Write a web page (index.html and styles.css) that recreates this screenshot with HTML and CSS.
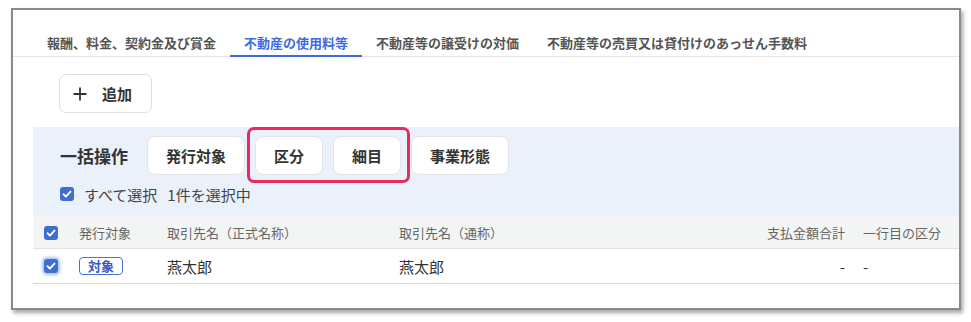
FILE: index.html
```html
<html lang="ja">
<head>
<title>支払調書</title>
<link rel="stylesheet" href="styles.css">
</head>
<body>
<div class="window">
	<nav class="tabs">
		<a class="tab">報酬、料金、契約金及び賞金</a>
		<a class="tab active">不動産の使用料等</a>
		<a class="tab">不動産等の譲受けの対価</a>
		<a class="tab">不動産等の売買又は貸付けのあっせん手数料</a>
	</nav>

	<div class="content">
		<button class="add-btn">
			<svg class="plus" width="16" height="16" viewBox="0 0 16 16"><path d="M8 1.5v13M1.5 8h13" stroke="#333" stroke-width="1.8" fill="none"/></svg>
			<span>追加</span>
		</button>

		<section class="bulk">
			<div class="bulk-row">
				<span class="bulk-label">一括操作</span>
				<button class="op-btn">発行対象</button>
				<!-- highlighted pair -->
				<div class="highlight">
					<button class="op-btn">区分</button>
					<button class="op-btn">細目</button>
				</div>
				<button class="op-btn">事業形態</button>
			</div>
			<div class="select-row">
				<span class="check"><svg width="14" height="14" viewBox="0 0 14 14"><path d="M3.5 7.2l2.4 2.4 4.6-5" stroke="#fff" stroke-width="1.9" fill="none" stroke-linecap="round" stroke-linejoin="round"/></svg></span>
				<span>すべて選択</span>
				<span class="count">1件を選択中</span>
			</div>
		</section>

		<div class="table">
			<div class="trow thead">
				<div class="cell"><span class="check"><svg width="14" height="14" viewBox="0 0 14 14"><path d="M3.5 7.2l2.4 2.4 4.6-5" stroke="#fff" stroke-width="1.9" fill="none" stroke-linecap="round" stroke-linejoin="round"/></svg></span></div>
				<div class="cell">発行対象</div>
				<div class="cell">取引先名（正式名称）</div>
				<div class="cell">取引先名（通称）</div>
				<div class="cell num">支払金額合計</div>
				<div class="cell last">一行目の区分</div>
			</div>
			<div class="trow">
				<div class="cell"><span class="check focus"><svg width="14" height="14" viewBox="0 0 14 14"><path d="M3.5 7.2l2.4 2.4 4.6-5" stroke="#fff" stroke-width="1.9" fill="none" stroke-linecap="round" stroke-linejoin="round"/></svg></span></div>
				<div class="cell"><span class="badge">対象</span></div>
				<div class="cell">燕太郎</div>
				<div class="cell">燕太郎</div>
				<div class="cell num">-</div>
				<div class="cell last">-</div>
			</div>
		</div>
	</div>
</div>
</body>
</html>
```

FILE: styles.css
```css
body { margin:0; padding:8px 0 0 11px; background:#fff; font-family:"Noto Sans CJK JP", "Noto Sans", sans-serif; color:#333; }

.window { width:946px; height:298px; border:2px solid #8a8a8a; background:#fff; box-shadow:2px 3px 4px rgba(0,0,0,0.35); overflow:hidden; }

.tabs { display:flex; padding:23px 0 0 20px; border-bottom:1px solid #e6e6e6; }
.tab { padding:0 14px 2px 14px; font-size:13px; line-height:20px; font-weight:bold; color:#555; border-bottom:2px solid transparent; margin-bottom:-1px; white-space:nowrap; }
.tab.active { color:#3e6ce0; border-bottom-color:#3e6ce0; }

.content { padding-left:20px; }

.add-btn { display:flex; align-items:center; gap:14px; margin:17px 0 0 26px; height:39px; width:93px; padding:0 0 0 12px; border:1px solid #dedede; border-radius:7px; background:#fff; font-family:inherit; font-size:15px; font-weight:bold; color:#333; }
.plus { flex:none; }

.bulk { margin-top:14px; background:#ebf1fa; padding:9px 0 12px 27px; }
.bulk-row { display:flex; align-items:center; gap:10px; }
.bulk-label { font-size:17px; font-weight:bold; color:#333; margin-right:9px; }
.op-btn { height:39px; padding:0 18px; border:1px solid #e2e4e8; border-radius:8px; background:#fff; font-family:inherit; font-size:15px; font-weight:bold; color:#333; }
.highlight { display:flex; gap:10px; position:relative; }
.highlight::after { content:""; position:absolute; left:-8px; right:-9px; top:-9px; bottom:-8px; border:3px solid #ea2a5c; border-radius:7px; }

.select-row { display:flex; align-items:center; margin-top:9px; height:20px; font-size:15px; color:#444; }
.select-row .check { margin-right:10px; }
.count { margin-left:10px; }

.check { display:inline-flex; width:14px; height:14px; border-radius:3px; background:#3e6fd0; }
.check.focus { box-shadow:0 0 3px 2px rgba(70,120,230,0.45); }

.trow { display:grid; grid-template-columns:46px 88px 232px 1fr 96px 96px; align-items:center; height:34px; border-bottom:1px solid #d6d6d6; font-size:15px; color:#333; }
.thead { height:31px; background:#f3f5f5; border-bottom-color:#e2e2e2; font-size:13px; color:#666; padding-top:1px; }
.cell { white-space:nowrap; display:flex; align-items:center; }
.cell:first-child { padding-left:11px; }
.cell.num { justify-content:flex-end; padding-right:18px; }
.badge { display:inline-block; height:16px; line-height:16px; padding:0 8px; border:1px solid #4d6fd3; border-radius:4px; font-size:13px; font-weight:bold; color:#3558c4; }
```
